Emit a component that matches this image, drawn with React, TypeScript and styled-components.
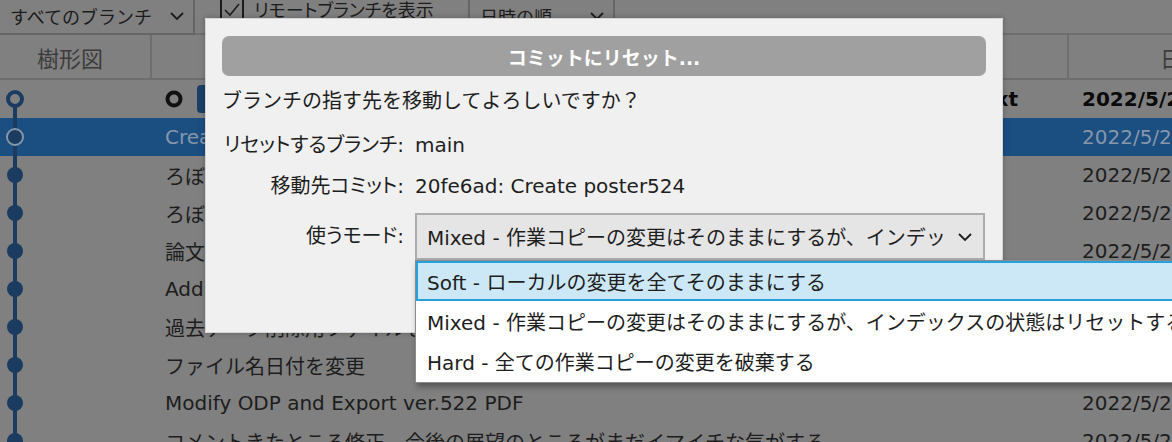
import React from 'react';
import styled, { createGlobalStyle } from 'styled-components';

const GlobalStyle = createGlobalStyle`
  html, body {
    margin: 0;
    padding: 0;
    background: #808080;
  }
  body {
    font-family: 'DejaVu Sans', 'Noto Sans CJK JP', sans-serif;
    font-size: 20px;
    overflow: hidden;
  }
`;

const Screen = styled.div`
  position: relative;
  width: 1172px;
  height: 442px;
  overflow: hidden;
  background: #808080;
  color: #1d1d1d;
`;

const Toolbar = styled.div`
  height: 35px;
  display: flex;
  align-items: stretch;
  border-bottom: 2px solid #6e6e6e;
  box-sizing: border-box;
  font-size: 18px;
`;

const ToolSelect = styled.div<{ $width: number; $left?: boolean }>`
  width: ${(p) => p.$width}px;
  box-sizing: border-box;
  display: flex;
  align-items: center;
  justify-content: space-between;
  padding: 0 8px 2px 10px;
  border-right: 2px solid #666;
  border-left: ${(p) => (p.$left ? '2px solid #666' : 'none')};
  border-bottom: 2px solid #666;
  margin-bottom: -2px;
  color: #1c1c1c;
`;

const CheckItem = styled.div`
  width: 273px;
  display: flex;
  align-items: flex-start;
  gap: 10px;
  padding-left: 25px;
  box-sizing: border-box;
  color: #1c1c1c;
  line-height: 22px;
  font-feature-settings: 'palt';
`;

const CheckBox = styled.span`
  width: 20px;
  height: 20px;
  margin-top: -2px;
  border: 2px solid #1c1c1c;
  display: flex;
  align-items: center;
  justify-content: center;
`;

const Grid = `
  display: grid;
  grid-template-columns: 152px 917px 228px 1fr;
`;

const HeaderRow = styled.div`
  ${Grid};
  height: 43px;
  border-bottom: 2px solid #6e6e6e;
  color: #3c3c3c;
  font-size: 22px;
`;

const HeadCell = styled.div<{ $shift?: number }>`
  display: flex;
  align-items: center;
  justify-content: center;
  padding-right: ${(p) => p.$shift ?? 0}px;
  border-right: 2px solid #6e6e6e;
  white-space: nowrap;
  overflow: hidden;
`;

const Row = styled.div<{ $selected?: boolean; $bold?: boolean }>`
  ${Grid};
  height: 38px;
  background: ${(p) => (p.$selected ? '#1b4e81' : 'transparent')};
  color: ${(p) => (p.$selected ? '#8797a9' : p.$bold ? '#0a0a0a' : '#1d1d1d')};
  font-weight: ${(p) => (p.$bold ? 700 : 400)};
`;

const GraphCell = styled.div`
  height: 38px;
`;

const MessageCell = styled.div`
  display: flex;
  align-items: center;
  gap: 14px;
  padding-left: 13px;
  white-space: nowrap;
  overflow: hidden;
`;

const Tail = styled.span`
  margin-left: auto;
  padding-right: 51px;
`;

const Tag = styled.span`
  background: #1b3f66;
  color: #8797a9;
  border-radius: 4px;
  padding: 0 10px;
  height: 28px;
  display: flex;
  align-items: center;
  font-size: 18px;
`;

const DateCell = styled.div`
  display: flex;
  align-items: center;
  padding-left: 13px;
  white-space: nowrap;
`;

const Dialog = styled.div`
  position: absolute;
  left: 205px;
  top: 18px;
  width: 798px;
  height: 315px;
  box-sizing: border-box;
  background: #f0f0f0;
  border: 1px solid #d4d4d4;
  padding: 17px 16px;
  color: #1e1e1e;
  box-shadow: 0 0 6px rgba(0, 0, 0, 0.25);
`;

const TitleBar = styled.div`
  height: 40px;
  border-radius: 7px;
  background: #a0a0a0;
  color: #fff;
  font-weight: 700;
  font-size: 19px;
  display: flex;
  align-items: center;
  justify-content: center;
`;

const Question = styled.div`
  margin-top: 8px;
  line-height: 34px;
`;

const Form = styled.div`
  margin-top: 7px;
  display: grid;
  grid-template-columns: 182px 1fr;
  grid-template-rows: 41px 41px 53px;
  column-gap: 11px;
`;

const Label = styled.div<{ $tall?: boolean }>`
  text-align: right;
  line-height: ${(p) => (p.$tall ? '47px' : '41px')};
  align-self: end;
  white-space: nowrap;
  font-feature-settings: 'palt';
`;

const Value = styled.div`
  line-height: 41px;
  white-space: nowrap;
`;

const Select = styled.div`
  align-self: end;
  width: 570px;
  height: 47px;
  box-sizing: border-box;
  border: 2px solid #adadad;
  background: #e5e5e5;
  display: flex;
  align-items: center;
  padding: 0 10px 0 10px;
  gap: 14px;
`;

const SelectText = styled.span`
  flex: 1;
  overflow: hidden;
  white-space: nowrap;
`;

const ListBox = styled.div`
  position: absolute;
  left: 415px;
  top: 260px;
  width: 800px;
  background: #fff;
  border: 1px solid #8a8a8a;
  box-shadow: 2px 4px 6px rgba(0, 0, 0, 0.35);
  padding-bottom: 1px;
  color: #1e1e1e;
`;

const Option = styled.div<{ $active?: boolean }>`
  height: 40px;
  box-sizing: border-box;
  display: flex;
  align-items: center;
  padding-left: ${(p) => (p.$active ? '9px' : '11px')};
  background: ${(p) => (p.$active ? '#cce8f7' : '#fff')};
  border: ${(p) => (p.$active ? '2px solid #28a0dc' : 'none')};
  white-space: nowrap;
`;

const Chevron: React.FC<{ color?: string }> = ({ color = '#1c1c1c' }) => (
  <svg width="16" height="10" viewBox="0 0 16 10">
    <path d="M2 2 L8 8 L14 2" fill="none" stroke={color} strokeWidth="1.8" />
  </svg>
);

type Node = 'ring' | 'current' | 'dot';

const GraphNode: React.FC<{ kind: Node; first?: boolean }> = ({ kind, first }) => (
  <svg width="152" height="38" viewBox="0 0 152 38" style={{ display: 'block' }}>
    <line x1="15" y1={first ? 19 : 0} x2="15" y2="38" stroke="#1b3c60" strokeWidth="4" />
    {kind === 'ring' && <circle cx="15" cy="19" r="7" fill="#808080" stroke="#1b3c60" strokeWidth="4" />}
    {kind === 'current' && <circle cx="15" cy="19" r="8" fill="#1b3c60" stroke="#8797a9" strokeWidth="2" />}
    {kind === 'dot' && <circle cx="15" cy="19" r="8" fill="#1b3c60" />}
  </svg>
);

const commits = [
  'ろぼっとの画像を追加',
  'ろぼっとの説明文を修正',
  '論文の参考文献を追加',
  'Add figures for poster',
  '過去データ削除用ファイルを追加',
  'ファイル名日付を変更',
  'Modify ODP and Export ver.522 PDF',
  'コメントきたところ修正、今後の展望のところがまだイマイチな気がする',
];

const modes = [
  'Soft - ローカルの変更を全てそのままにする',
  'Mixed - 作業コピーの変更はそのままにするが、インデックスの状態はリセットする',
  'Hard - 全ての作業コピーの変更を破棄する',
];

const App: React.FC = () => (
  <Screen>
    <GlobalStyle />
    <Toolbar>
      <ToolSelect $width={195}>
        <span>すべてのブランチ</span>
        <Chevron />
      </ToolSelect>
      <CheckItem>
        <CheckBox>
          <svg width="16" height="14" viewBox="0 0 16 14">
            <path d="M1 7 L6 12 L15 1" fill="none" stroke="#1c1c1c" strokeWidth="1.6" />
          </svg>
        </CheckBox>
        <span>リモートブランチを表示</span>
      </CheckItem>
      <ToolSelect $width={147} $left>
        <span>日時の順</span>
        <Chevron />
      </ToolSelect>
    </Toolbar>
    <HeaderRow>
      <HeadCell $shift={10}>樹形図</HeadCell>
      <HeadCell>説明</HeadCell>
      <HeadCell>日時</HeadCell>
      <HeadCell>作成者</HeadCell>
    </HeaderRow>
    <Row $bold>
      <GraphCell>
        <GraphNode kind="ring" first />
      </GraphCell>
      <MessageCell>
        <svg width="18" height="18" viewBox="0 0 18 18">
          <circle cx="9" cy="9" r="6.5" fill="none" stroke="#111" strokeWidth="4" />
        </svg>
        <Tag>main</Tag>
        <Tail>Update next</Tail>
      </MessageCell>
      <DateCell>2022/5/24 18:02</DateCell>
    </Row>
    <Row $selected>
      <GraphCell>
        <GraphNode kind="current" />
      </GraphCell>
      <MessageCell>Create poster524</MessageCell>
      <DateCell>2022/5/24 17:40</DateCell>
    </Row>
    {commits.map((c, i) => (
      <Row key={i}>
        <GraphCell>
          <GraphNode kind="dot" />
        </GraphCell>
        <MessageCell>{c}</MessageCell>
        <DateCell>2022/5/2{i % 3} 1{i}:20</DateCell>
      </Row>
    ))}

    <Dialog>
      <TitleBar>コミットにリセット...</TitleBar>
      <Question>ブランチの指す先を移動してよろしいですか？</Question>
      <Form>
        <Label>リセットするブランチ:</Label>
        <Value>main</Value>
        <Label>移動先コミット:</Label>
        <Value>20fe6ad: Create poster524</Value>
        <Label $tall>使うモード:</Label>
        <Select>
          <SelectText>{modes[1]}</SelectText>
          <Chevron />
        </Select>
      </Form>
    </Dialog>

    <ListBox>
      {modes.map((m, i) => (
        <Option key={m} $active={i === 0}>
          {m}
        </Option>
      ))}
    </ListBox>
  </Screen>
);

export default App;
